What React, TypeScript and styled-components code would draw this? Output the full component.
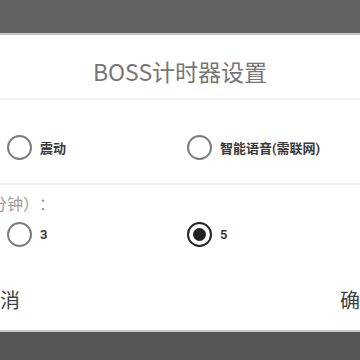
import React from "react";
import styled, { createGlobalStyle } from "styled-components";

const Global = createGlobalStyle`
  html, body { margin: 0; padding: 0; background: #555555; }
  body { width: 360px; height: 360px; overflow: hidden; font-family: Roboto, "Noto Sans CJK SC", sans-serif; }
  #root { width: 360px; height: 360px; overflow: hidden; }
`;

const Screen = styled.div`
  width: 360px;
  height: 360px;
  display: flex;
  flex-direction: column;
  overflow: hidden;
  background: #555555;
`;

const Backdrop = styled.div`
  height: 33px;
  flex: none;
  background: #636363;
  border-bottom: 2px solid #c4c4c4;
`;

const Dialog = styled.div`
  width: 400px;
  margin-left: -20px;
  height: 295px;
  flex: none;
  background: #ffffff;
  display: flex;
  flex-direction: column;
  border-bottom: 2px solid #c8c8c8;
`;

const Title = styled.div`
  height: 65px;
  box-sizing: border-box;
  padding-top: 8px;
  display: flex;
  align-items: center;
  justify-content: center;
  font-family: "Noto Sans CJK SC", sans-serif;
  font-size: 23px;
  color: #767676;
  border-bottom: 2px solid #f1f1f1;
`;

const Section = styled.div<{ $divider?: boolean }>`
  display: flex;
  flex-direction: column;
  padding-left: 27px;
  border-bottom: ${(p) => (p.$divider ? "2px solid #f1f1f1" : "none")};
`;

const RadioGrid = styled.div<{ $height: number; $offset?: number }>`
  display: grid;
  grid-template-columns: 180px 180px;
  box-sizing: border-box;
  height: ${(p) => p.$height}px;
  padding-top: ${(p) => p.$offset ?? 0}px;
  align-items: center;
`;

const Option = styled.div`
  display: flex;
  align-items: center;
  gap: 8px;
`;

const Circle = styled.div<{ $checked?: boolean }>`
  width: 21px;
  height: 21px;
  border-radius: 50%;
  border: 2.5px solid ${(p) => (p.$checked ? "#222" : "#7c7c7c")};
  display: flex;
  align-items: center;
  justify-content: center;
  flex: none;
  &::after {
    content: "";
    display: ${(p) => (p.$checked ? "block" : "none")};
    width: 13px;
    height: 13px;
    border-radius: 50%;
    background: #222;
  }
`;

const OptionText = styled.span`
  font-family: Roboto, "Noto Sans CJK SC", sans-serif;
  font-size: 13px;
  font-weight: 700;
  color: #3a3a3a;
`;

const Label = styled.div`
  height: 30px;
  display: flex;
  align-items: flex-end;
  margin-left: -64px;
  font-family: "Noto Sans CJK SC", sans-serif;
  font-size: 16px;
  color: #9a9a9a;
  text-spacing-trim: space-all;
`;

const Actions = styled.div`
  flex: 1;
  display: flex;
  justify-content: space-between;
  align-items: center;
  padding-top: 16px;
`;

const ActionButton = styled.span`
  font-family: "Noto Sans CJK SC", sans-serif;
  font-size: 20px;
  color: #424242;
`;

function Radio({ label, checked }: { label: string; checked?: boolean }) {
  return (
    <Option>
      <Circle $checked={checked} />
      <OptionText>{label}</OptionText>
    </Option>
  );
}

export default function App() {
  return (
    <>
      <Global />
      <Screen>
        <Backdrop />
        <Dialog>
          <Title>BOSS计时器设置</Title>
          <Section $divider>
            <RadioGrid $height={83} $offset={12}>
              <Radio label="震动" />
              <Radio label="智能语音(需联网)" />
            </RadioGrid>
          </Section>
          <Section>
            <Label>时间（分钟）：</Label>
            <RadioGrid $height={38}>
              <Radio label="3" />
              <Radio label="5" checked />
            </RadioGrid>
          </Section>
          <Actions>
            <ActionButton>取消</ActionButton>
            <ActionButton>确定</ActionButton>
          </Actions>
        </Dialog>
      </Screen>
    </>
  );
}
